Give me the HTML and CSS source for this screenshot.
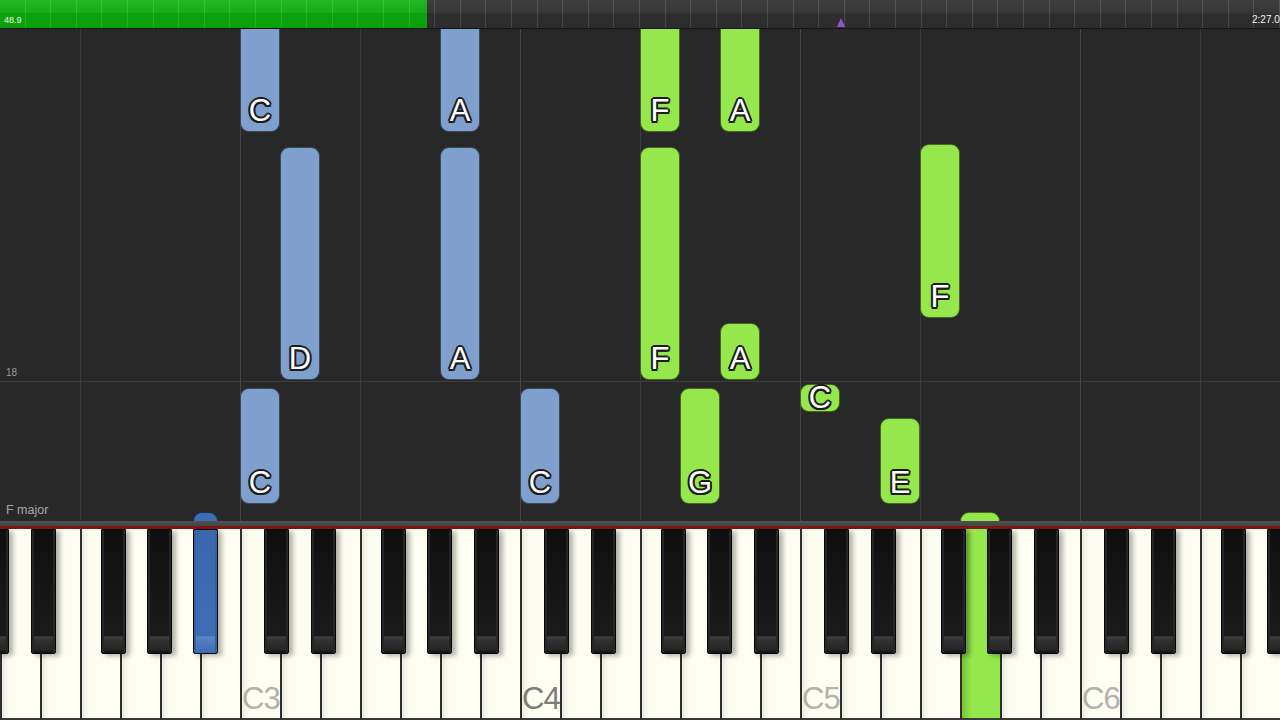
FILE: index.html
```html
<!DOCTYPE html>
<html>
<head>
    <title>Piano Roll</title>
    <link rel="stylesheet" href="styles.css">
</head>
<body>
    <div class="screen">
        <div class="timeline">
            <div class="progress" style="width:427px"></div>
            <div class="track"></div>
            <span class="time time-left">48.9</span>
            <span class="time time-right">2:27.0</span>
            <span class="marker"></span>
        </div>

        <div class="roll">
            <div class="measure" style="top:352px"><span>18</span></div>

            <!-- left hand -->
            <div class="note lh" style="left:240px;top:-10px;height:113px">C</div>
            <div class="note lh" style="left:440px;top:-10px;height:113px">A</div>
            <div class="note lh" style="left:280px;top:118px;height:233px">D</div>
            <div class="note lh" style="left:440px;top:118px;height:233px">A</div>
            <div class="note lh" style="left:240px;top:359px;height:116px">C</div>
            <div class="note lh" style="left:520px;top:359px;height:116px">C</div>
            <div class="note lh sharp" style="left:193px;top:483px;height:20px"></div>

            <!-- right hand -->
            <div class="note rh" style="left:640px;top:-10px;height:113px">F</div>
            <div class="note rh" style="left:720px;top:-10px;height:113px">A</div>
            <div class="note rh" style="left:640px;top:118px;height:233px">F</div>
            <div class="note rh" style="left:720px;top:294px;height:57px">A</div>
            <div class="note rh" style="left:920px;top:115px;height:174px">F</div>
            <div class="note rh short" style="left:800px;top:355px;height:28px">C</div>
            <div class="note rh" style="left:680px;top:359px;height:116px">G</div>
            <div class="note rh" style="left:880px;top:389px;height:86px">E</div>
            <div class="note rh" style="left:960px;top:483px;height:20px"></div>

            <span class="key-sig">F major</span>
        </div>

        <div class="rail"></div>

        <div class="keyboard">
            <div class="white"></div>
            <div class="white"></div>
            <div class="white"></div>
            <div class="white"></div>
            <div class="white"></div>
            <div class="white"></div>
            <div class="white"><span class="label">C3</span></div>
            <div class="white"></div>
            <div class="white"></div>
            <div class="white"></div>
            <div class="white"></div>
            <div class="white"></div>
            <div class="white"></div>
            <div class="white"><span class="label dark">C4</span></div>
            <div class="white"></div>
            <div class="white"></div>
            <div class="white"></div>
            <div class="white"></div>
            <div class="white"></div>
            <div class="white"></div>
            <div class="white"><span class="label">C5</span></div>
            <div class="white"></div>
            <div class="white"></div>
            <div class="white"></div>
            <div class="white pressed-rh"></div>
            <div class="white"></div>
            <div class="white"></div>
            <div class="white"><span class="label">C6</span></div>
            <div class="white"></div>
            <div class="white"></div>
            <div class="white"></div>
            <div class="white"></div>

            <div class="black" style="left:-16px"></div>
            <div class="black" style="left:31px"></div>
            <div class="black" style="left:101px"></div>
            <div class="black" style="left:147px"></div>
            <div class="black pressed-lh" style="left:193px"></div>
            <div class="black" style="left:264px"></div>
            <div class="black" style="left:311px"></div>
            <div class="black" style="left:381px"></div>
            <div class="black" style="left:427px"></div>
            <div class="black" style="left:474px"></div>
            <div class="black" style="left:544px"></div>
            <div class="black" style="left:591px"></div>
            <div class="black" style="left:661px"></div>
            <div class="black" style="left:707px"></div>
            <div class="black" style="left:754px"></div>
            <div class="black" style="left:824px"></div>
            <div class="black" style="left:871px"></div>
            <div class="black" style="left:941px"></div>
            <div class="black" style="left:987px"></div>
            <div class="black" style="left:1034px"></div>
            <div class="black" style="left:1104px"></div>
            <div class="black" style="left:1151px"></div>
            <div class="black" style="left:1221px"></div>
            <div class="black" style="left:1267px"></div>
        </div>
    </div>
</body>
</html>
```

FILE: styles.css
```css
body {
    margin: 0;
    background: #282828;
    font-family: "Liberation Sans", Arial, sans-serif;
}
.screen {
    width: 1280px;
    height: 720px;
    display: flex;
    flex-direction: column;
    overflow: hidden;
}

/* timeline */
.timeline {
    position: relative;
    display: flex;
    flex: none;
    height: 29px;
    box-sizing: border-box;
    border-bottom: 1px solid #161616;
}
.timeline::after {
    content: "";
    position: absolute;
    top: 0;
    left: 0;
    right: 0;
    bottom: 0;
    background: repeating-linear-gradient(to right, transparent 0, transparent 24.6px, rgba(255,255,255,0.12) 24.6px, rgba(255,255,255,0.12) 25.6px);
}
.progress {
    flex: none;
    background: linear-gradient(#24b724 0%, #17ad17 44%, #0ba20b 48%, #09a009 100%);
}
.track {
    flex: 1;
    background: linear-gradient(#3f3f3f 0%, #373737 44%, #2f2f2f 48%, #2c2c2c 100%);
}
.time {
    position: absolute;
    bottom: 3px;
    font-size: 9px;
    color: #f2f2f2;
    z-index: 1;
}
.time-left {
    left: 4px;
}
.time-right {
    left: 1252px;
    font-size: 10px;
    white-space: nowrap;
}
.marker {
    position: absolute;
    left: 837px;
    bottom: 1px;
    width: 0;
    height: 0;
    border-left: 4px solid transparent;
    border-right: 4px solid transparent;
    border-bottom: 9px solid #8d54d8;
    z-index: 1;
}

/* falling notes */
.roll {
    position: relative;
    flex: 1;
    overflow: hidden;
    background-color: #282828;
    background-image: linear-gradient(to right, #474747 1px, transparent 1px), linear-gradient(to right, #3a3a3a 1px, transparent 1px);
    background-size: 280px 100%, 280px 100%;
    background-position: 240px 0, 80px 0;
}
.measure {
    position: absolute;
    left: 0;
    right: 0;
    height: 1px;
    background: #3d3d3d;
}
.measure span {
    position: absolute;
    left: 6px;
    bottom: 4px;
    font-size: 10px;
    line-height: 10px;
    color: #9a9a9a;
}
.key-sig {
    position: absolute;
    left: 6px;
    bottom: 4px;
    font-size: 12.5px;
    color: #a6a6a6;
}
.note {
    position: absolute;
    width: 40px;
    box-sizing: border-box;
    border: 1px solid rgba(0,0,0,0.55);
    border-radius: 9px;
    display: flex;
    align-items: flex-end;
    justify-content: center;
    padding-bottom: 5px;
    color: #fff;
    font-size: 31px;
    line-height: 30px;
    text-shadow: -1.5px -1.5px 0 #1c1c1c, 1.5px -1.5px 0 #1c1c1c, -1.5px 1.5px 0 #1c1c1c, 1.5px 1.5px 0 #1c1c1c,
        0 -2px 0 #1c1c1c, 0 2px 0 #1c1c1c, -2px 0 0 #1c1c1c, 2px 0 0 #1c1c1c;
}
.note.lh {
    background: #7f9fcc;
}
.note.rh {
    background: #95e74c;
}
.note.short {
    align-items: center;
    padding-bottom: 0;
    line-height: 26px;
}
.note.sharp {
    width: 25px;
    background: #3e6db6;
}

/* keyboard */
.rail {
    flex: none;
    height: 5px;
    background: linear-gradient(#525252, #444);
    border-bottom: 3px solid #7e1717;
}
.keyboard {
    position: relative;
    display: flex;
    flex: none;
    height: 191px;
    background: #1e1e1e;
}
.white {
    flex: 0 0 40px;
    box-sizing: border-box;
    border-left: 2px solid #2e2e2e;
    border-bottom: 2px solid #3a3a3a;
    background: linear-gradient(to right, #ecece0, #fdfdf1 20%, #fdfdf1);
    display: flex;
    align-items: flex-end;
    padding: 0 0 4px 0;
}
.white.pressed-rh {
    background: linear-gradient(to right, #78c23a, #95e84c 25%, #95e84c);
}
.label {
    font-size: 31px;
    line-height: 31px;
    letter-spacing: -1px;
    color: #b3b3aa;
    white-space: nowrap;
}
.label.dark {
    color: #7e7e77;
}
.black {
    position: absolute;
    top: 0;
    width: 25px;
    height: 125px;
    box-sizing: border-box;
    border: 1px solid #050505;
    border-radius: 0 0 2px 2px;
    background: linear-gradient(#0f0f0f 0%, #1a1a1a 86%, #404040 87%, #303030 90%, #262626 97%, #111 100%);
    box-shadow: inset 2px 0 0 #262626, inset -2px 0 0 #262626, 4px 2px 5px rgba(0,0,0,0.3);
}
.black.pressed-lh {
    background: linear-gradient(#3a67ad 0%, #3e6db6 86%, #5c86c6 87%, #4c79bd 92%, #3e6db6 100%);
    box-shadow: inset 2px 0 0 #35609f, inset -2px 0 0 #35609f, 4px 2px 5px rgba(0,0,0,0.3);
}
```
